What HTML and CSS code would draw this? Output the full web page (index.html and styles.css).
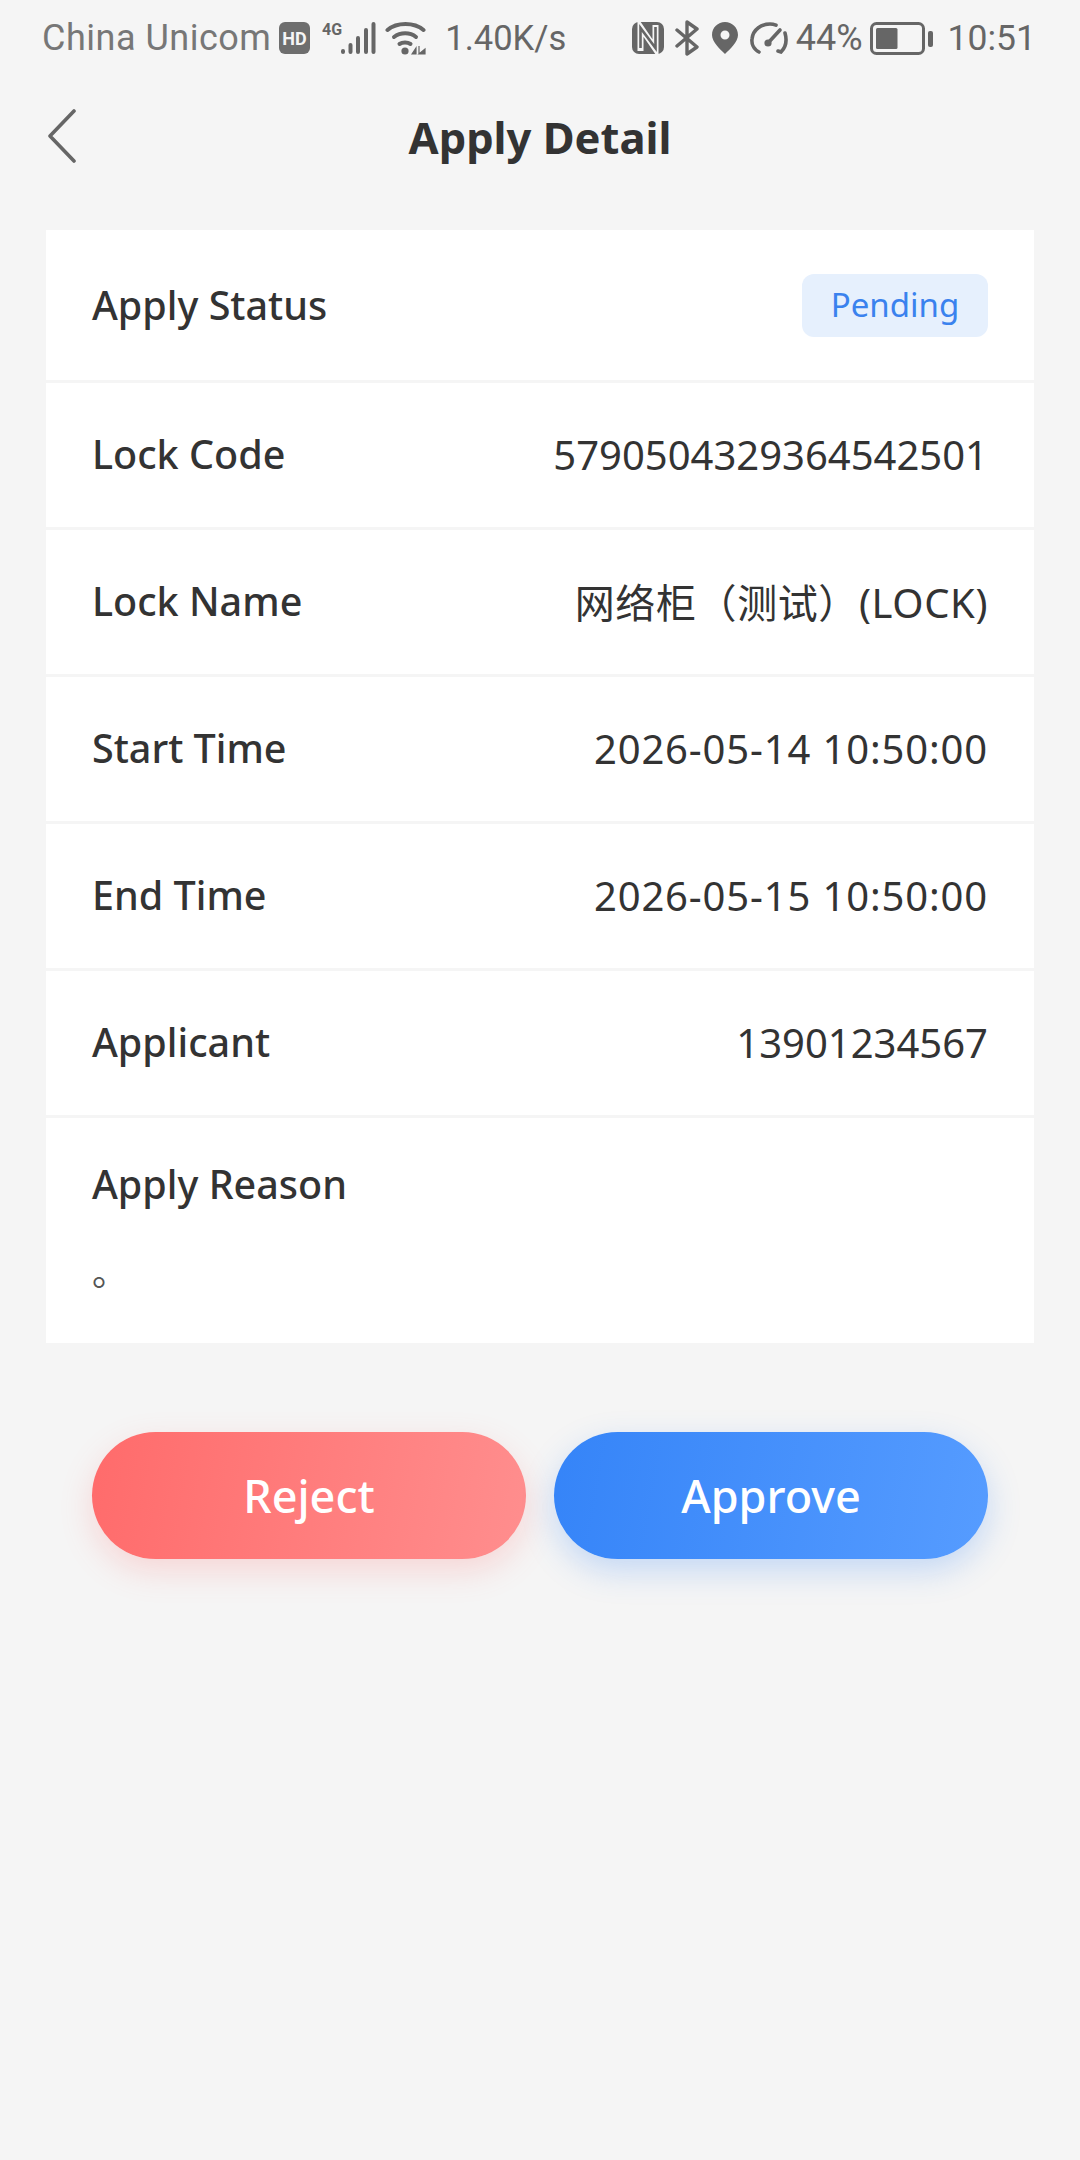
FILE: index.html
```html
<!DOCTYPE html>
<html lang="en">
<head>
<meta charset="utf-8">
<title>Apply Detail</title>
<link rel="stylesheet" href="styles.css">
</head>
<body>
<div class="status-bar">
  <div class="status-left">
    <span class="carrier">China Unicom</span>
    <svg class="ic-hd" viewBox="0 0 31 32"><rect width="31" height="32" rx="6" fill="#6e6e6e"/><text x="15.500" y="22.500" class="hd-text">HD</text></svg>
    <svg class="ic-signal" viewBox="0 0 54 34">
      <text x="0" y="14" class="g-text">4G</text>
      <g stroke="#666" stroke-width="4" stroke-linecap="round"><path d="M21 31v-1M28.500 31v-7M36 31v-14M44 31V9M51.500 31V3"/></g>
    </svg>
    <svg class="ic-wifi" viewBox="0 0 41 34">
      <g fill="none" stroke="#666" stroke-width="4" stroke-linecap="round"><path d="M2.500 9C12 1 29 1 38.500 9"/><path d="M9 16c6.500-5 16-5 22 0"/><path d="M14.500 23c3-2 8-2 11 0"/></g>
      <circle cx="20" cy="30" r="3.600" fill="#666"/>
      <path d="M27 33l4-6v6zM34 25v8M34 33l6-5v5z" fill="#666" stroke="#666" stroke-width="1.200"/>
    </svg>
    <span class="speed">1.40K/s</span>
  </div>
  <div class="status-right">
    <svg class="ic-nfc" viewBox="0 0 32 32"><rect width="32" height="32" rx="7" fill="#666"/><path fill="none" stroke="#f5f5f5" stroke-width="6" d="M8.500 29V5l15 22V3"/><path fill="none" stroke="#666" stroke-width="2.600" d="M8.500 26V6l15 20V5"/></svg>
    <svg class="ic-bt" viewBox="0 0 24 36"><path fill="none" stroke="#666" stroke-width="3.400" stroke-linecap="round" stroke-linejoin="round" d="M2 10l20 17-10 7V2l10 7L2 26"/></svg>
    <svg class="ic-loc" viewBox="0 0 26 32"><path fill="#666" fill-rule="evenodd" d="M13 0C6 0 0 5.500 0 13c0 7 8 14 13 19 5-5 13-12 13-19C26 5.500 20 0 13 0zm0 8.500a4.500 4.500 0 1 1 0 9 4.500 4.500 0 0 1 0-9z"/></svg>
    <svg class="ic-gauge" viewBox="0 0 38 32"><g fill="none" stroke="#666" stroke-width="3.600" stroke-linecap="round"><path d="M9 30C3 27 1.500 21 2 17 3 7 12 2 20 2c2 0 4 .4 6 1.200"/><path d="M35 11c2 7 1 14-4 19l-3-1"/><path d="M18 21L30 8"/></g><circle cx="18" cy="21" r="3.600" fill="#666"/></svg>
    <span class="pct">44%</span>
    <svg class="ic-batt" viewBox="0 0 64 33"><rect x="1.500" y="1.500" width="52" height="30" rx="5" fill="none" stroke="#666" stroke-width="3"/><rect x="6" y="6" width="21.500" height="21" rx="1.500" fill="#666"/><rect x="58" y="9" width="5" height="16" rx="2" fill="#666"/></svg>
    <span class="clock">10:51</span>
  </div>
</div>

<header class="nav">
  <svg class="back" viewBox="0 0 30 54"><path d="M27 2L3 27l24 25" fill="none" stroke="#666" stroke-width="3.600" stroke-linecap="round" stroke-linejoin="round"/></svg>
  <h1 class="title">Apply Detail</h1>
</header>

<main class="card">
  <div class="row row-first"><span class="label">Apply Status</span><span class="badge">Pending</span></div>
  <div class="row"><span class="label">Lock Code</span><span class="value">5790504329364542501</span></div>
  <div class="row"><span class="label">Lock Name</span><span class="value value-name">网络柜（测试）(LOCK)</span></div>
  <div class="row"><span class="label">Start Time</span><span class="value value-time">2026-05-14 10:50:00</span></div>
  <div class="row"><span class="label">End Time</span><span class="value value-time">2026-05-15 10:50:00</span></div>
  <div class="row"><span class="label">Applicant</span><span class="value">13901234567</span></div>
  <div class="reason"><span class="label">Apply Reason</span><span class="reason-text">。</span></div>
</main>

<div class="actions">
  <button class="btn btn-reject">Reject</button>
  <button class="btn btn-approve">Approve</button>
</div>
</body>
</html>
```
FILE: styles.css
```css
* { box-sizing: border-box; }
html, body { margin: 0; padding: 0; }
body {
  width: 1080px;
  height: 2160px;
  background: #f5f5f5;
  font-family: "Noto Sans", "Noto Sans CJK SC", sans-serif;
  color: #333;
  overflow: hidden;
}
.status-bar {
  height: 76px;
  padding: 0 44px 0 42px;
  display: flex;
  justify-content: space-between;
  align-items: center;
  color: #666;
  font-family: "Roboto", sans-serif;
  font-size: 35px;
}
.status-left, .status-right { display: flex; align-items: center; }
.carrier { color: #777; margin-right: 8px; font-size: 36px; letter-spacing: .5px; }
.ic-hd { width: 31px; height: 32px; }
.hd-text { font: 700 18px "Roboto", sans-serif; fill: #f5f5f5; text-anchor: middle; }
.g-text { font: 700 16px "Roboto", sans-serif; fill: #666; }
.ic-signal { width: 54px; height: 34px; margin-left: 12px; overflow: visible; }
.ic-wifi { width: 41px; height: 34px; margin-left: 9px; }
.speed { margin-left: 19px; font-size: 34.5px; }
.ic-nfc { width: 32px; height: 32px; }
.ic-bt { width: 24px; height: 36px; margin-left: 11px; }
.ic-loc { width: 26px; height: 32px; margin-left: 13px; }
.ic-gauge { width: 38px; height: 32px; margin-left: 12px; }
.pct { margin-left: 8px; font-size: 36px; }
.ic-batt { width: 64px; height: 33px; margin-left: 7px; }
.clock { margin-left: 14px; font-size: 35.5px; }
.nav {
  height: 64px;
  margin-top: 30px;
  padding-bottom: 2px;
  position: relative;
  display: flex;
  align-items: center;
  justify-content: center;
}
.back { position: absolute; left: 47px; top: 3px; width: 30px; height: 54px; }
.title { margin: 0; font-size: 43.5px; font-weight: 700; color: #333; }
.card {
  margin: 60px 46px 0;
  background: #fff;
}
.row {
  height: 147px;
  padding: 0 46px 2px;
  display: flex;
  align-items: center;
  justify-content: space-between;
  border-bottom: 3px solid #f5f5f5;
}
.row-first { height: 153px; padding-bottom: 0; }
.label { font-size: 39.5px; font-weight: 500; color: #333; }
.value { font-size: 40px; color: #333; }
.value-time { letter-spacing: .85px; }
.value-name { letter-spacing: .6px; }
.badge {
  width: 186px;
  height: 63px;
  border-radius: 12px;
  background: #e6f0fd;
  color: #3a82ee;
  font-size: 33px;
  padding-bottom: 2px;
  display: flex;
  align-items: center;
  justify-content: center;
}
.reason { height: 225px; padding: 39px 46px 0; display: flex; flex-direction: column; gap: 33px; }
.reason-text { font-size: 36px; color: #555; }
.actions {
  margin: 89px 92px 0;
  display: flex;
  gap: 28px;
}
.btn {
  flex: 1;
  height: 127px;
  border: 0;
  border-radius: 64px;
  color: #fff;
  font-family: inherit;
  font-size: 45px;
  font-weight: 500;
}
.btn-reject {
  background: linear-gradient(100deg, #ff6b6b, #ff8e8e);
  box-shadow: 0 12px 32px rgba(255, 107, 107, .22);
}
.btn-approve {
  background: linear-gradient(100deg, #3584f8, #569cff);
  box-shadow: 0 12px 32px rgba(53, 132, 248, .25);
}
```
